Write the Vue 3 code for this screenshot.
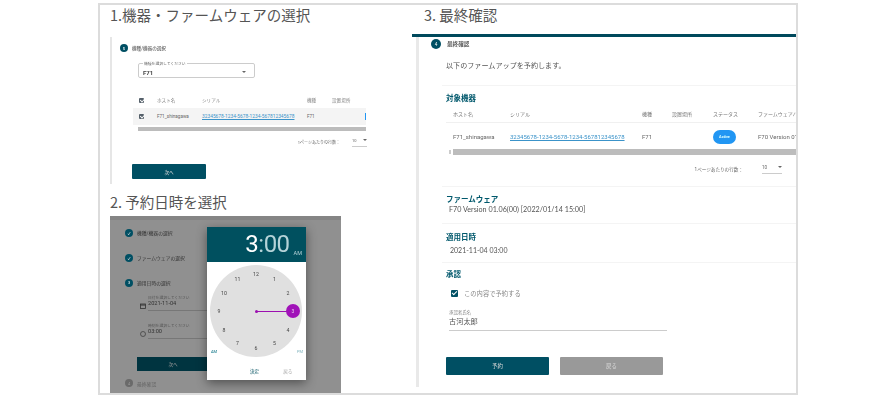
<script setup>
// 時計の文字盤: 12 から順に30度ずつ配置
const dial = [12, 1, 2, 3, 4, 5, 6, 7, 8, 9, 10, 11].map((n, i) => {
  const a = (i * 30 * Math.PI) / 180
  return { n, x: 46 + 37 * Math.sin(a), y: 46 - 37 * Math.cos(a) }
})
const serial = '32345678-1234-5678-1234-567812345678'
</script>

<template>
  <div class="frame">
    <div class="left">
      <h2 class="title">1.機器・ファームウェアの選択</h2>
      <section class="shot1 soft">
        <div class="step"><span class="dot">5</span><span>機種/機器の選択</span></div>
        <div class="select">
          <span class="legend">機種を選択してください</span>
          <b>F71</b><i class="caret"></i>
        </div>
        <div class="t1 t1-head">
          <span class="chk"></span><span>ホスト名</span><span>シリアル</span><span>機種</span><span>設置場所</span>
        </div>
        <div class="t1 t1-row">
          <span class="chk"></span><span>F71_shinagawa</span><a>{{ serial }}</a><span>F71</span><span></span>
          <em class="pill-cut"></em>
        </div>
        <div class="scroll1"></div>
        <div class="pager1">
          <span>1ページあたりの行数：</span>
          <span class="pager-num">10<i class="caret"></i></span>
        </div>
        <button class="btn next1">次へ</button>
      </section>

      <h2 class="title title2">2. 予約日時を選択</h2>
      <section class="shot2 soft">
        <div class="under">
          <div class="ustep"><span class="dot">✓</span>機種/機器の選択</div>
          <div class="ustep"><span class="dot">✓</span>ファームウェアの選択</div>
          <div class="ustep"><span class="dot">3</span>適用日時の選択</div>
          <div class="ufield">
            <svg width="6" height="6" viewBox="0 0 6 6"><rect x=".5" y="1" width="5" height="4.5" fill="none" stroke="#333" stroke-width=".8"/><path d="M.5 2h5" stroke="#333"/></svg>
            <div class="uval"><small>日付を選択してください</small>2021-11-04</div>
          </div>
          <div class="ufield">
            <svg width="6" height="6" viewBox="0 0 6 6"><circle cx="3" cy="3" r="2.5" fill="none" stroke="#444" stroke-width=".8"/></svg>
            <div class="uval"><small>時刻を選択してください</small>03:00</div>
          </div>
          <div class="ubtn">次へ</div>
          <div class="ustep ulast"><span class="dot gray">4</span>最終確認</div>
        </div>
        <div class="dialog">
          <div class="dlg-head"><span class="big">3</span><span class="big dim">:00</span><small>AM</small></div>
          <div class="dlg-body">
            <div class="clock">
              <span v-for="d in dial" :key="d.n" class="num" :style="{ left: d.x + 'px', top: d.y + 'px' }">{{ d.n === 3 ? '' : d.n }}</span>
              <i class="hand"></i><i class="center"></i><span class="knob">3</span>
            </div>
            <div class="ampm"><span>AM</span><span>PM</span></div>
            <div class="dlg-foot"><span>決定</span><span class="off">戻る</span></div>
          </div>
        </div>
      </section>
    </div>

    <div class="right">
      <h2 class="title title3">3. 最終確認</h2>
      <section class="shot3 soft">
        <div class="step3"><span class="dot">4</span><b>最終確認</b></div>
        <p class="intro">以下のファームアップを予約します。</p>
        <div class="block b-target">
          <h3>対象機器</h3>
          <div class="t3 t3-head"><span>ホスト名</span><span>シリアル</span><span>機種</span><span>設置場所</span><span>ステータス</span><span>ファームウェアバ</span></div>
          <div class="t3 t3-row"><span>F71_shinagawa</span><a>{{ serial }}</a><span>F71</span><span></span><span class="pill">Active</span><span>F70 Version 01.06</span></div>
          <div class="scroll3"><i></i><div></div></div>
          <div class="pager3"><span>1ページあたりの行数：</span><span class="pager-num">10<i class="caret"></i></span></div>
        </div>
        <div class="block b-fw">
          <h3>ファームウェア</h3>
          <p class="fw">F70 Version 01.06(00) [2022/01/14 15:00]</p>
        </div>
        <div class="block b-date">
          <h3>適用日時</h3>
          <p class="date">2021-11-04 03:00</p>
        </div>
        <div class="b-ok">
          <h3>承認</h3>
          <label class="agree"><span class="chk big-chk"></span>この内容で予約する</label>
          <div class="name"><small>承認者氏名</small>古河太郎</div>
          <div class="actions">
            <button class="btn act">予約</button>
            <button class="btn act back">戻る</button>
          </div>
        </div>
      </section>
    </div>
  </div>
</template>

<style>
body { margin: 0; background: #fff; }
</style>

<style scoped>
* { box-sizing: border-box; }
.frame {
  width: 700px;
  height: 392px;
  margin: 3px 0 0 98px;
  border: 2px solid #dcdcdc;
  display: flex;
  overflow: hidden;
  font-family: Roboto, "Noto Sans CJK JP", sans-serif;
  color: #333;
}
.soft { filter: blur(0.4px); }
.left { width: 312px; padding-left: 10px; flex: none; }
.right { flex: 1; min-width: 0; }
.title {
  margin: 0;
  font-family: "Noto Sans CJK JP", sans-serif;
  font-size: 14.5px;
  line-height: 20px;
  font-weight: 400;
  color: #555;
  white-space: nowrap;
}
.title2 { margin-top: 8px; }
.title3 { margin-left: 12px; }

/* 1 */
.shot1 {
  width: 258px;
  height: 147px;
  margin-top: 12px;
  border-left: 2px solid #e6e6e6;
  font-size: 4.6px;
  color: #666;
  overflow: hidden;
}
.step { display: flex; align-items: center; gap: 4px; height: 22px; padding-left: 8px; font-weight: 500; }
.dot {
  width: 8px; height: 8px; border-radius: 50%;
  background: #004f63; color: #fff; font-size: 4px;
  display: flex; align-items: center; justify-content: center; flex: none;
}
.dot.gray { background: #6a6a6a; color: #999; }
.select {
  position: relative;
  width: 117px; height: 15px;
  margin: 4px 0 0 26px;
  border: 1px solid #ccc; border-radius: 2px;
  display: flex; align-items: center; justify-content: space-between;
  padding: 3px 8px 0 4px;
}
.select b { font-size: 6px; color: #444; }
.legend { position: absolute; left: 4px; top: -3px; background: #fff; padding: 0 1px; font-size: 3.8px; line-height: 5px; }
.caret { display: inline-block; border: 2px solid transparent; border-top: 2.5px solid #666; border-bottom: 0; }
.t1 {
  display: grid;
  grid-template-columns: 18px 45px 105px 25px 40px;
  align-items: center;
  padding-left: 6px;
  margin-left: 21px;
  position: relative;
}
.t1-head { height: 16px; margin-top: 14px; color: #888; }
.t1-row { height: 17px; background: #f4f4f4; width: 233px; }
.t1-row a { font-size: 4.85px; }
.t1-row a, .t3-row a { color: #3b93c9; text-decoration: underline; white-space: nowrap; }
.chk { position: relative; width: 5px; height: 5px; background: #55606a; border-radius: 1px; }
.chk::after {
  content: ""; position: absolute; left: 30%; top: 8%;
  width: 30%; height: 55%;
  border: solid #fff; border-width: 0 .7px .7px 0;
  transform: rotate(45deg);
}
.pill-cut { position: absolute; right: 0; top: 5px; width: 1.5px; height: 7px; background: #2196f3; }
.scroll1 { height: 4px; width: 228px; margin: 2px 0 0 26px; background: #bcbcbc; }
.pager1 { display: flex; justify-content: flex-end; align-items: center; gap: 12px; width: 255px; height: 16px; margin-top: 3px; font-size: 4px; }
.pager-num { display: inline-flex; align-items: center; justify-content: space-between; width: 15px; border-bottom: 1px solid #ccc; padding-bottom: 3px; }
.btn { display: block; border: 0; border-radius: 1px; background: #004f63; color: #ddd; font-family: "Noto Sans CJK JP", sans-serif; padding: 0; }
.next1 { width: 74px; height: 15px; margin: 14px 0 0 20px; font-size: 4.6px; }

/* 2 */
.shot2 {
  position: relative;
  width: 231px;
  height: 178px;
  margin-top: 4px;
  background: #909090;
  border-top: 4px solid #858585;
  font-size: 5px;
  color: #333;
  overflow: hidden;
}
.under { padding-left: 15px; }
.ustep { display: flex; align-items: center; gap: 4px; height: 25px; font-size: 4.8px; }
.ufield { display: flex; align-items: flex-start; gap: 2px; height: 28px; margin-left: 15px; }
.ufield svg { margin-top: 8px; }
.uval { width: 59px; border-bottom: 1px solid #777; font-size: 5.6px; padding-bottom: 4px; }
.uval small { display: block; font-size: 3.8px; line-height: 5px; color: #555; }
.ubtn { width: 72px; height: 14px; margin: 6px 0 0 12px; background: #003440; color: #999; display: flex; align-items: center; justify-content: center; font-size: 4.6px; }
.ustep.ulast { height: 22px; margin-top: 1px; color: #666; }
.dialog {
  position: absolute;
  left: 97px; top: 7px;
  width: 99px; height: 153px;
  background: #fff;
  box-shadow: 0 3px 10px rgba(0, 0, 0, .45);
}
.dlg-head {
  height: 35px; background: #00505f; color: #fff;
  display: flex; align-items: flex-end; justify-content: flex-end;
  padding: 0 4px 5px 0;
  line-height: 26px;
}
.big { font-family: Roboto, sans-serif; font-size: 24px; letter-spacing: -.5px; }
.dim { color: #b5d3d8; }
.dlg-head small { font-size: 5.5px; line-height: 8px; margin-left: 4px; color: #b5d3d8; }
.dlg-body { position: relative; height: 118px; }
.clock { position: relative; width: 92px; height: 92px; margin-left: 3px; top: 3px; border-radius: 50%; background: #e0e0e0; }
.num { position: absolute; transform: translate(-50%, -50%); font-size: 5.2px; color: #444; font-family: Roboto, sans-serif; }
.hand { position: absolute; left: 46px; top: 45.5px; width: 37px; height: 1px; background: #9c10b0; }
.center { position: absolute; left: 44.5px; top: 44.5px; width: 3px; height: 3px; border-radius: 50%; background: #9c10b0; }
.knob {
  position: absolute; left: 76px; top: 39px;
  width: 14px; height: 14px; border-radius: 50%;
  background: #a012b8; color: #e9c9ef; font-size: 5px;
  display: flex; align-items: center; justify-content: center;
}
.ampm { position: absolute; left: 4px; right: 3px; top: 87px; display: flex; justify-content: space-between; font-size: 4px; color: #006d80; }
.ampm span:last-child { color: #7fb3bd; }
.dlg-foot { position: absolute; left: 43px; top: 106px; display: flex; gap: 24px; font-size: 4.6px; color: #00505f; }
.off { color: #aaa; }

/* 3 */
.shot3 {
  height: 359px;
  margin-top: 9px;
  border-top: 3px solid #00495c;
  position: relative;
  padding-left: 34px;
  font-size: 5px;
  color: #777;
  overflow: hidden;
}
.shot3::before { content: ""; position: absolute; left: 4px; top: 0; bottom: 6px; width: 3px; background: #e9e9e9; }
.step3 { display: flex; align-items: center; gap: 6px; height: 14px; margin-left: -15px; font-size: 5.6px; color: #444; }
.step3 .dot { width: 10px; height: 10px; font-size: 4.6px; }
.step3 b { font-weight: 500; }
.intro { margin: 8px 0 0; font-size: 7.1px; line-height: 14px; color: #555; white-space: nowrap; height: 26px; }
.block { border-top: 1px solid #f4f4f4; margin-left: -4px; padding-left: 4px; }
h3 { margin: 0; font-size: 7.5px; line-height: 11px; color: #00586c; font-weight: 700; white-space: nowrap; font-family: "Noto Sans CJK JP", sans-serif; }
.b-target { height: 101px; padding-top: 6px; }
.b-target h3 { margin-bottom: 2px; }
.t3 {
  display: grid;
  grid-template-columns: 57px 132px 30px 41px 45px 80px;
  padding-left: 7px;
  align-items: center;
  white-space: nowrap;
  width: 392px;
}
.t3-head { height: 18px; border-bottom: 1px solid #f0f0f0; }
.t3-row { height: 27px; font-size: 6px; color: #666; }
.t3-row a { font-size: 6px; }
.pill {
  width: 23px; height: 14px; border-radius: 7px;
  background: #2196f3; color: #dff; font-size: 3.8px; font-weight: 700;
  display: flex; align-items: center; justify-content: center;
}
.scroll3 { display: flex; align-items: center; gap: 2px; margin: -1px 0 0 3px; }
.scroll3 i { width: 2px; height: 4px; background: #ccc; }
.scroll3 div { flex: 1; height: 6px; background: #bcbcbc; }
.pager3 { display: flex; justify-content: flex-end; align-items: center; gap: 19px; height: 20px; margin-top: 4px; padding-right: 14px; font-size: 4.6px; color: #666; }
.pager3 .pager-num { width: 20px; }
.b-fw { height: 37px; padding-top: 6px; }
.fw { margin: 0 0 0 3px; font-size: 7.2px; line-height: 11px; color: #555; white-space: nowrap; font-family: Lato, "Noto Sans CJK JP", sans-serif; }
.b-date { height: 39px; padding-top: 7px; }
.date { margin: 3px 0 0 4px; font-size: 7px; line-height: 11px; color: #555; font-family: Lato, sans-serif; }
.b-ok { border-top: 1px solid #f4f4f4; margin-left: -4px; padding: 5px 0 0 4px; }
.agree { display: flex; align-items: center; gap: 6px; margin: 9px 0 0 5px; height: 10px; font-size: 6.3px; color: #888; font-family: "Noto Sans CJK JP", sans-serif; }
.big-chk { width: 7px; height: 7px; background: #004f63; }
.name { width: 218px; margin: 12px 0 0 3px; border-bottom: 1px solid #ccc; font-size: 7.2px; line-height: 11px; padding-bottom: 3px; color: #555; }
.name small { display: block; font-size: 4.4px; line-height: 6px; color: #888; }
.actions { display: flex; gap: 11px; margin-top: 26px; }
.act { width: 103px; height: 18px; font-size: 5.4px; }
.back { background: #999; }
</style>
